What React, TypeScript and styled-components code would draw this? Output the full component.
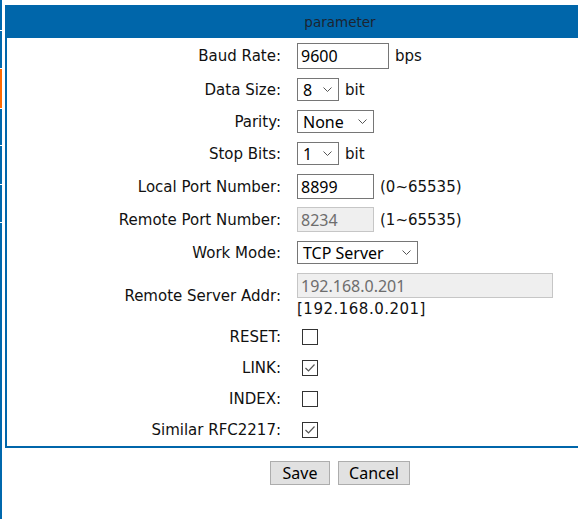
import React from "react";
import styled, { createGlobalStyle } from "styled-components";

const Global = createGlobalStyle`
  html, body { margin: 0; padding: 0; background: #fff; overflow: hidden; }
  body { font-family: "DejaVu Sans", Verdana, sans-serif; color: #111; }
`;

const Page = styled.div`
  display: flex;
  align-items: flex-start;
  width: 578px;
  height: 519px;
  overflow: hidden;
`;

const Strip = styled.div`
  display: flex;
  flex-direction: column;
  gap: 1px;
  width: 2px;
  height: 519px;
  flex: none;
`;

const StripSeg = styled.div<{ $h?: number; $active?: boolean }>`
  background: ${(p) => (p.$active ? "#ff6a00" : "#0068ad")};
  height: ${(p) => (p.$h ? `${p.$h}px` : "auto")};
  flex: ${(p) => (p.$h ? "none" : "1")};
`;

const Main = styled.div`
  flex: none;
  width: 670px;
  padding: 5px 0 0 3px;
`;

const Header = styled.div`
  height: 33px;
  background: #0066aa;
  display: flex;
  align-items: center;
  justify-content: center;
  font-size: 13.5px;
  color: #1c2430;
`;

const Body = styled.div`
  border: 2px solid #0066aa;
  border-top: 0;
`;

const Row = styled.div<{ $h: number }>`
  display: grid;
  grid-template-columns: 274px 1fr;
  column-gap: 16px;
  align-items: center;
  height: ${(p) => p.$h}px;
`;

const Label = styled.div`
  text-align: right;
  font-size: 15px;
  color: #111;
  white-space: nowrap;
`;

const Cell = styled.div`
  display: flex;
  align-items: center;
  gap: 6px;
  font-size: 15px;
`;

const Stack = styled.div`
  display: flex;
  flex-direction: column;
  align-items: flex-start;
  gap: 2px;
`;

const TextBox = styled.div<{ $w: number; $h?: number; $disabled?: boolean }>`
  box-sizing: border-box;
  width: ${(p) => p.$w}px;
  height: ${(p) => p.$h ?? 25}px;
  border: 1px solid ${(p) => (p.$disabled ? "#c6c6c6" : "#767676")};
  background: ${(p) => (p.$disabled ? "#efefef" : "#fff")};
  color: ${(p) => (p.$disabled ? "#6d6d6d" : "#000")};
  font-family: "Noto Sans", "Liberation Sans", sans-serif;
  font-size: 16px;
  padding-left: 3px;
  display: flex;
  align-items: center;
`;

const SelectBox = styled.div<{ $w: number }>`
  box-sizing: border-box;
  width: ${(p) => p.$w}px;
  height: 23px;
  border: 1px solid #767676;
  background: #fff;
  font-family: "Noto Sans", "Liberation Sans", sans-serif;
  font-size: 16px;
  color: #000;
  display: flex;
  align-items: center;
  justify-content: space-between;
  padding: 0 6px 0 5px;
`;

const Unit = styled.span<{ $spaced?: boolean }>`
  font-size: 15px;
  color: #111;
  letter-spacing: ${(p) => (p.$spaced ? "0.5px" : "0")};
`;

const Check = styled.div`
  box-sizing: border-box;
  width: 16px;
  height: 16px;
  margin-left: 5px;
  border: 1px solid #333;
  background: #fff;
  display: flex;
  align-items: center;
  justify-content: center;
`;

const Buttons = styled.div`
  display: flex;
  justify-content: center;
  gap: 8px;
  margin-top: 13px;
`;

const Button = styled.button<{ $w: number }>`
  box-sizing: border-box;
  width: ${(p) => p.$w}px;
  height: 24px;
  border: 1px solid #adadad;
  background: #e1e1e1;
  font-family: "Noto Sans", "Liberation Sans", sans-serif;
  font-size: 16px;
  color: #000;
  padding: 0;
`;

const Chevron = () => (
  <svg width="9" height="5" viewBox="0 0 9 5">
    <path d="M0.5 0.5 L4.5 4.5 L8.5 0.5" fill="none" stroke="#555" strokeWidth="1" />
  </svg>
);

const Tick = () => (
  <svg width="12" height="10" viewBox="0 0 12 10">
    <path d="M1.5 5 L4.5 8 L10.5 1.5" fill="none" stroke="#555" strokeWidth="1.2" />
  </svg>
);

const Select = ({ w, value }: { w: number; value: string }) => (
  <SelectBox $w={w}>
    <span>{value}</span>
    <Chevron />
  </SelectBox>
);

export default function App() {
  return (
    <>
      <Global />
      <Page>
        <Strip>
          <StripSeg $h={30} />
          <StripSeg $h={37} />
          <StripSeg $h={39} $active />
          <StripSeg $h={36} />
          <StripSeg $h={38} />
          <StripSeg $h={37} />
          <StripSeg />
        </Strip>
        <Main>
          <Header>parameter</Header>
          <Body>
            <Row $h={35}>
              <Label>Baud Rate:</Label>
              <Cell>
                <TextBox $w={92} $h={26}>9600</TextBox>
                <Unit>bps</Unit>
              </Cell>
            </Row>
            <Row $h={33}>
              <Label>Data Size:</Label>
              <Cell>
                <Select w={42} value="8" />
                <Unit>bit</Unit>
              </Cell>
            </Row>
            <Row $h={31}>
              <Label>Parity:</Label>
              <Cell>
                <Select w={77} value="None" />
              </Cell>
            </Row>
            <Row $h={33}>
              <Label>Stop Bits:</Label>
              <Cell>
                <Select w={42} value="1" />
                <Unit>bit</Unit>
              </Cell>
            </Row>
            <Row $h={33}>
              <Label>Local Port Number:</Label>
              <Cell>
                <TextBox $w={77}>8899</TextBox>
                <Unit>(0~65535)</Unit>
              </Cell>
            </Row>
            <Row $h={33}>
              <Label>Remote Port Number:</Label>
              <Cell>
                <TextBox $w={77} $disabled>8234</TextBox>
                <Unit>(1~65535)</Unit>
              </Cell>
            </Row>
            <Row $h={33}>
              <Label>Work Mode:</Label>
              <Cell>
                <Select w={121} value="TCP Server" />
              </Cell>
            </Row>
            <Row $h={53}>
              <Label>Remote Server Addr:</Label>
              <Stack>
                <TextBox $w={256} $disabled>192.168.0.201</TextBox>
                <Unit $spaced>[192.168.0.201]</Unit>
              </Stack>
            </Row>
            <Row $h={30}>
              <Label>RESET:</Label>
              <Cell>
                <Check />
              </Cell>
            </Row>
            <Row $h={31}>
              <Label>LINK:</Label>
              <Cell>
                <Check>
                  <Tick />
                </Check>
              </Cell>
            </Row>
            <Row $h={31}>
              <Label>INDEX:</Label>
              <Cell>
                <Check />
              </Cell>
            </Row>
            <Row $h={32}>
              <Label>Similar RFC2217:</Label>
              <Cell>
                <Check>
                  <Tick />
                </Check>
              </Cell>
            </Row>
          </Body>
          <Buttons>
            <Button $w={60}>Save</Button>
            <Button $w={72}>Cancel</Button>
          </Buttons>
        </Main>
      </Page>
    </>
  );
}
